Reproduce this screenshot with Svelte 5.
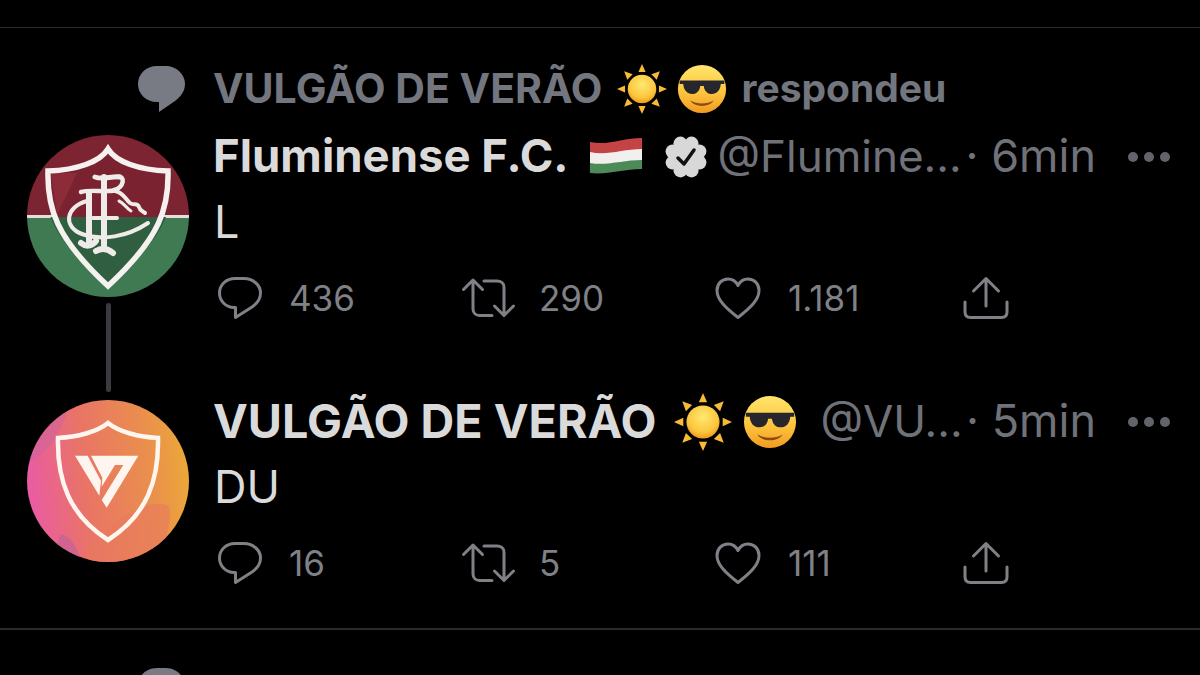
<script>
  const tweets = [
    { name: 'Fluminense F.C.', handle: '@Flumine...', time: '6min', text: 'L', counts: ['436', '290', '1.181'], kind: 'flu' },
    { name: 'VULGÃO DE VERÃO', handle: '@VU...', time: '5min', text: 'DU', counts: ['16', '5', '111'], kind: 'vv' }
  ];
  const lobes = [0, 45, 90, 135, 180, 225, 270, 315];
</script>

{#snippet sun(size)}
  <svg class="emoji sun" width={size} height={size} viewBox="0 0 56 56" aria-hidden="true">
    <defs>
      <radialGradient id="sunfill" cx="50%" cy="35%" r="65%">
        <stop offset="0" stop-color="#ffe873" />
        <stop offset="0.7" stop-color="#fcc63c" />
        <stop offset="1" stop-color="#ef9a1e" />
      </radialGradient>
    </defs>
    <circle cx="28" cy="28" r="16" fill="url(#sunfill)" />
    <g fill="#f8bb36">
      <path d="M28 0l4 9h-8z" /><path d="M28 56l4-9h-8z" /><path d="M0 28l9-4v8z" /><path d="M56 28l-9-4v8z" />
      <path d="M8 8l9.500 3.500-6 6z" /><path d="M48 8l-9.500 3.500 6 6z" /><path d="M8 48l9.500-3.500-6-6z" /><path d="M48 48l-9.500-3.500 6-6z" />
    </g>
  </svg>
{/snippet}

{#snippet cool(size)}
  <svg class="emoji cool" width={size} height={size} viewBox="0 0 56 56" aria-hidden="true">
    <defs>
      <linearGradient id="facefill" x1="0" y1="0" x2="0" y2="1">
        <stop offset="0" stop-color="#ffe56b" />
        <stop offset="0.6" stop-color="#fcc23c" />
        <stop offset="1" stop-color="#f29a22" />
      </linearGradient>
    </defs>
    <circle cx="28" cy="28" r="27" fill="url(#facefill)" />
    <path d="M3 18.500H53V22.500H49C48.500 30 44 34 38 33.500C33 33 30.500 29 30 24.500H26C25.500 29 23 33 18 33.500C12 34 7.500 30 7 22.500H3Z" fill="#26262c" />
    <path d="M15 41C22 45.500 34 45.500 41 41C37 49 19 49 15 41Z" fill="#8d4a12" />
  </svg>
{/snippet}

{#snippet flag()}
  <svg class="flag" width="54" height="37" viewBox="0 0 54 37" aria-hidden="true">
    <path d="M1 5C18 9 34 1 53 1V13C34 13 18 20 1 16Z" fill="#c44445" />
    <path d="M1 15C18 19 34 12 53 12V24C34 24 18 30 1 27Z" fill="#f2f0ee" />
    <path d="M1 26C18 29 34 23 53 23V32C34 32 18 38 1 36Z" fill="#4c8a5a" />
  </svg>
{/snippet}

{#snippet badge()}
  <svg class="badge" width="44" height="44" viewBox="0 0 44 44" aria-hidden="true">
    <g fill="#d8d8d8">
      <circle cx="22" cy="22" r="16" />
      {#each lobes as a}
        <circle cx={22 + 14.5 * Math.cos((a * Math.PI) / 180 + 0.39)} cy={22 + 14.5 * Math.sin((a * Math.PI) / 180 + 0.39)} r="7" />
      {/each}
    </g>
    <path d="M14 23l6 6 10-14" fill="none" stroke="#111114" stroke-width="3.500" stroke-linecap="round" stroke-linejoin="round" />
  </svg>
{/snippet}

{#snippet crest()}
  <svg class="avatar" viewBox="0 0 162 162" role="img" aria-label="Fluminense">
    <defs><clipPath id="fluclip"><circle cx="81" cy="81" r="81" /></clipPath></defs>
    <g clip-path="url(#fluclip)">
      <rect width="162" height="81" fill="#7c2431" />
      <rect y="81" width="162" height="81" fill="#3f7a52" />
      <rect y="80" width="162" height="3" fill="#e8dcdc" />
    </g>
    <path d="M81 14C73 27 50 35 21 36C20 72 28 102 81 151C134 102 142 72 141 36C112 35 89 27 81 14Z" fill="#7a2230" />
    <path d="M23.500 82H139C130 105 112 122 81 151C50 122 32 105 23.500 82Z" fill="#2f5f40" />
    <path d="M24 38L50 38L30 80Z" fill="#8c2c38" />
    <path d="M81 14C73 27 50 35 21 36C20 72 28 102 81 151C134 102 142 72 141 36C112 35 89 27 81 14Z" fill="none" stroke="#f4f1ee" stroke-width="5.500" />
    <g fill="none" stroke="#efebe8" stroke-linecap="round" stroke-linejoin="round">
      <path d="M77 42V110M69 116C74 113 80 113 86 118" stroke-width="6" />
      <path d="M62 58V106M54 108C60 113 66 110 69 106" stroke-width="6" />
      <path d="M68 42C76 45 84 41 93 42" stroke-width="5" />
      <path d="M90 42C99 40 97 53 87 55" stroke-width="4.500" />
      <path d="M88 56C97 58 98 64 103 68C107 71 110 67 112 72C113 76 116 76 118 78" stroke-width="4" />
      <path d="M54 57C64 54 78 58 90 55" stroke-width="4.500" />
      <path d="M66 83H90" stroke-width="4" />
      <path d="M60 66C38 72 36 92 55 99C75 106 100 102 121 88" stroke-width="4" />
      <path d="M92 66C97 68 99 73 104 76" stroke-width="3" />
    </g>
  </svg>
{/snippet}

{#snippet shield()}
  <svg class="avatar" viewBox="0 0 162 162" role="img" aria-label="Vulgão de Verão">
    <defs>
      <linearGradient id="vvgrad" x1="0" y1="0.5" x2="1" y2="0.4">
        <stop offset="0" stop-color="#ea5ba3" />
        <stop offset="0.35" stop-color="#e97466" />
        <stop offset="0.75" stop-color="#ea8f4d" />
        <stop offset="1" stop-color="#eca838" />
      </linearGradient>
      <clipPath id="vvclip"><circle cx="81" cy="81" r="81" /></clipPath>
    </defs>
    <g clip-path="url(#vvclip)">
      <rect width="162" height="162" fill="url(#vvgrad)" />
      <path d="M0 62C14 60 30 40 40 14L20 0H0Z" fill="#c8639f" opacity="0.45" />
      <path d="M34 134C44 136 52 150 54 162H22Z" fill="#c05f9c" opacity="0.6" />
      <path d="M60 150C80 125 120 95 142 106C146 125 136 145 130 162H60Z" fill="#e8795f" opacity="0.6" />
    </g>
    <path d="M81 23C70 32 50 37 31 38C30 80 42 115 81 140C120 115 132 80 131 38C112 37 92 32 81 23Z" fill="none" stroke="#fdf5ee" stroke-width="4.500" />
    <g fill="#fdf5ee">
      <path d="M48 55.700H60.700L74 81L72.300 95.700Z" />
      <path d="M64 55.700H111.300L79.700 107.700L74.700 100L96.300 65H88L74.700 86.700L75.300 77.700Z" />
    </g>
  </svg>
{/snippet}

{#snippet reply()}
  <svg class="icon" width="46" height="44" viewBox="0 0 46 44" aria-hidden="true">
    <path d="M18 2.500H27C36 2.500 43.500 9 43.500 17C43.500 23 40 27.500 35 31L18.500 41.500V31.500H17C9 31.500 2.500 25 2.500 17C2.500 9 9 2.500 18 2.500Z" />
  </svg>
{/snippet}

{#snippet retweet()}
  <svg class="icon" width="56" height="42" viewBox="0 0 56 42" aria-hidden="true">
    <path d="M3.500 12.500L13 3L22.500 12.500M13 4V32C13 36 16 38.500 19.500 38.500H32" />
    <path d="M24 4H37C41 4 44 6.500 44 10V38M34.500 29L44 38.500L53.500 29" />
  </svg>
{/snippet}

{#snippet heart()}
  <svg class="icon" width="48" height="44" viewBox="0 0 48 44" aria-hidden="true">
    <path d="M24 41.500C12 32 3 24 3 14.500C3 7.500 8 3 14 3C18.500 3 22 5.500 24 9.500C26 5.500 29.500 3 34 3C40 3 45 7.500 45 14.500C45 24 36 32 24 41.500Z" />
  </svg>
{/snippet}

{#snippet share()}
  <svg class="icon" width="48" height="44" viewBox="0 0 48 44" aria-hidden="true">
    <path d="M25 3V30M12.500 15L25 2.500L37.500 15" />
    <path d="M4 26V36C4 39.500 6 41.500 9.500 41.500H40.500C44 41.500 46 39.500 46 36V26" />
  </svg>
{/snippet}

<main class="timeline">
  <article class="thread">
    <div class="context">
      <svg class="context-icon" width="50" height="50" viewBox="0 0 50 50" aria-hidden="true">
        <path d="M20 2H29C39 2 48 10 48 20C48 28 43 33 38 37L22 48V38H20C9 38 1 30 1 20C1 10 9 2 20 2Z" />
      </svg>
      <span class="context-name">VULGÃO DE VERÃO</span>
      {@render sun(50)}
      {@render cool(50)}
      <span class="context-verb">respondeu</span>
    </div>

    {#each tweets as t, i}
      <section class="tweet" class:first={i === 0}>
        <div class="side">
          {#if t.kind === 'flu'}{@render crest()}{:else}{@render shield()}{/if}
          {#if i === 0}<div class="connector"></div>{/if}
        </div>
        <div class="body">
          <header class="meta" class:flu={t.kind === 'flu'}>
            <span class="name">{t.name}</span>
            {#if t.kind === 'flu'}
              {@render flag()}
              {@render badge()}
            {:else}
              {@render sun(58)}
              {@render cool(54)}
            {/if}
            <span class="handle">{t.handle}</span>
            <span class="time">· {t.time}</span>
            <span class="more" aria-label="Mais"><i></i><i></i><i></i></span>
          </header>
          <p class="text">{t.text}</p>
          <div class="actions">
            <div class="action">{@render reply()}<span>{t.counts[0]}</span></div>
            <div class="action rt">{@render retweet()}<span>{t.counts[1]}</span></div>
            <div class="action">{@render heart()}<span>{t.counts[2]}</span></div>
            <div class="action">{@render share()}</div>
          </div>
        </div>
      </section>
    {/each}
  </article>
  <div class="next">
    <svg class="context-icon" width="50" height="50" viewBox="0 0 50 50" aria-hidden="true">
      <path d="M20 2H29C39 2 48 10 48 20C48 28 43 33 38 37L22 48V38H20C9 38 1 30 1 20C1 10 9 2 20 2Z" />
    </svg>
  </div>
</main>

<style>
  :global(body) {
    margin: 0;
    background: #000;
  }
  .timeline {
    width: 1200px;
    height: 675px;
    overflow: hidden;
    box-sizing: border-box;
    padding-top: 27px;
    background: #000;
    font-family: Inter, "Liberation Sans", sans-serif;
    color: #dcdcdc;
  }
  .thread {
    height: 603px;
    box-sizing: border-box;
    border-top: 1px solid #2b2b2e;
    border-bottom: 2px solid #2b2b2e;
  }
  .context {
    display: flex;
    align-items: center;
    height: 50px;
    margin-top: 36px;
    padding-left: 137px;
    font-weight: 700;
    color: #73767e;
    white-space: nowrap;
  }
  .context-icon path {
    fill: #787b83;
  }
  .context-name {
    margin-left: 26px;
    margin-right: 15px;
    margin-bottom: 3px;
    font-size: 41px;
  }
  .context :global(.cool) {
    margin-left: 10px;
  }
  .context-verb {
    margin-left: 14px;
    margin-bottom: 3px;
    font-size: 39px;
  }
  .tweet {
    display: grid;
    grid-template-columns: 162px 1fr;
    column-gap: 25px;
    padding: 0 30px 0 27px;
  }
  .tweet.first {
    height: 265px;
    margin-top: 21px;
  }
  .side {
    display: flex;
    flex-direction: column;
    align-items: center;
  }
  .avatar {
    width: 162px;
    height: 162px;
    flex: none;
    display: block;
  }
  .connector {
    width: 5px;
    flex: 1;
    margin: 6px 0 8px;
    border-radius: 3px;
    background: #3a3b40;
  }
  .body {
    min-width: 0;
  }
  .meta {
    display: flex;
    align-items: center;
    height: 44px;
    white-space: nowrap;
    font-size: 44px;
    line-height: 44px;
  }
  .name {
    margin-left: -1px;
    margin-bottom: 3px;
    font-size: 46.700px;
    font-weight: 700;
    color: #dadada;
  }
  .meta.flu .name {
    font-size: 45.500px;
  }
  .meta :global(.emoji),
  .meta :global(.flag),
  .meta :global(.badge) {
    flex: none;
  }
  .meta :global(.flag) {
    margin-left: 20px;
    margin-top: -4px;
  }
  .meta :global(.badge) {
    margin-left: 21px;
  }
  .meta :global(.sun) {
    margin-left: 18px;
  }
  .meta :global(.cool) {
    margin-left: 11px;
  }
  .handle {
    margin-left: 10px;
    margin-bottom: 2px;
    color: #70727a;
    font-weight: 400;
  }
  .meta:not(.flu) .handle {
    margin-left: 23px;
  }
  .time {
    margin-left: auto;
    margin-bottom: 2px;
    font-size: 45px;
    color: #70727a;
    font-weight: 400;
  }
  .more {
    display: flex;
    gap: 6px;
    margin-left: 32px;
  }
  .more i {
    width: 10px;
    height: 10px;
    border-radius: 50%;
    background: #62646b;
  }
  .text {
    margin: 21px 0 0;
    font-size: 45px;
    line-height: 44px;
    color: #dadada;
  }
  .actions {
    display: grid;
    grid-template-columns: 243px 254px 247px 48px;
    margin-top: 32px;
    padding-left: 3px;
  }
  .action {
    display: flex;
    align-items: center;
    gap: 26px;
    height: 44px;
    font-size: 35px;
    color: #7f8187;
  }
  .action.rt {
    gap: 23px;
  }
  .action :global(.icon) {
    flex: none;
    fill: none;
    stroke: #7f8187;
    stroke-width: 3;
    stroke-linecap: round;
    stroke-linejoin: round;
  }
  .next {
    padding: 36px 0 0 137px;
  }
</style>
